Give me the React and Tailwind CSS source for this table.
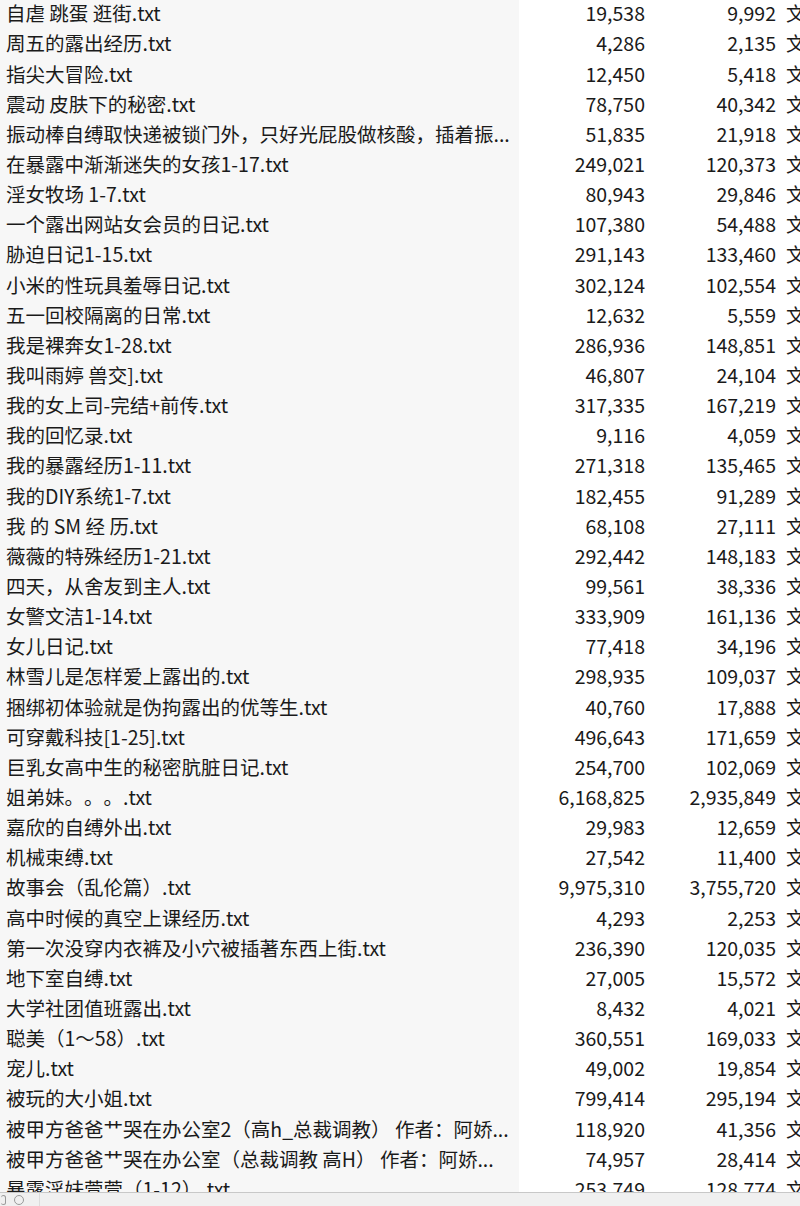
import React from 'react';

const files = [
  ['自虐 跳蛋 逛街.txt', '19,538', '9,992'],
  ['周五的露出经历.txt', '4,286', '2,135'],
  ['指尖大冒险.txt', '12,450', '5,418'],
  ['震动 皮肤下的秘密.txt', '78,750', '40,342'],
  ['振动棒自缚取快递被锁门外，只好光屁股做核酸，插着振...', '51,835', '21,918'],
  ['在暴露中渐渐迷失的女孩1-17.txt', '249,021', '120,373'],
  ['淫女牧场 1-7.txt', '80,943', '29,846'],
  ['一个露出网站女会员的日记.txt', '107,380', '54,488'],
  ['胁迫日记1-15.txt', '291,143', '133,460'],
  ['小米的性玩具羞辱日记.txt', '302,124', '102,554'],
  ['五一回校隔离的日常.txt', '12,632', '5,559'],
  ['我是裸奔女1-28.txt', '286,936', '148,851'],
  ['我叫雨婷 兽交].txt', '46,807', '24,104'],
  ['我的女上司-完结+前传.txt', '317,335', '167,219'],
  ['我的回忆录.txt', '9,116', '4,059'],
  ['我的暴露经历1-11.txt', '271,318', '135,465'],
  ['我的DIY系统1-7.txt', '182,455', '91,289'],
  ['我 的 SM 经 历.txt', '68,108', '27,111'],
  ['薇薇的特殊经历1-21.txt', '292,442', '148,183'],
  ['四天，从舍友到主人.txt', '99,561', '38,336'],
  ['女警文洁1-14.txt', '333,909', '161,136'],
  ['女儿日记.txt', '77,418', '34,196'],
  ['林雪儿是怎样爱上露出的.txt', '298,935', '109,037'],
  ['捆绑初体验就是伪拘露出的优等生.txt', '40,760', '17,888'],
  ['可穿戴科技[1-25].txt', '496,643', '171,659'],
  ['巨乳女高中生的秘密肮脏日记.txt', '254,700', '102,069'],
  ['姐弟妹。。。.txt', '6,168,825', '2,935,849'],
  ['嘉欣的自缚外出.txt', '29,983', '12,659'],
  ['机械束缚.txt', '27,542', '11,400'],
  ['故事会（乱伦篇）.txt', '9,975,310', '3,755,720'],
  ['高中时候的真空上课经历.txt', '4,293', '2,253'],
  ['第一次没穿内衣裤及小穴被插著东西上街.txt', '236,390', '120,035'],
  ['地下室自缚.txt', '27,005', '15,572'],
  ['大学社团值班露出.txt', '8,432', '4,021'],
  ['聪美（1～58）.txt', '360,551', '169,033'],
  ['宠儿.txt', '49,002', '19,854'],
  ['被玩的大小姐.txt', '799,414', '295,194'],
  ['被甲方爸爸艹哭在办公室2（高h_总裁调教） 作者：阿娇...', '118,920', '41,356'],
  ['被甲方爸爸艹哭在办公室（总裁调教 高H） 作者：阿娇...', '74,957', '28,414'],
  ['暴露淫妹萱萱（1-12）.txt', '253,749', '128,774'],
];

export default function App() {
  return (
    <div
      className="w-[800px] h-[1206px] bg-white text-[#1a1a1a] overflow-hidden flex flex-col [text-spacing-trim:space-all]"
      style={{ fontFamily: '"Noto Sans CJK SC", "Noto Sans", sans-serif' }}
    >
      <div className="h-[1192px] shrink-0 overflow-hidden">
        <div className="-mt-[2px]">
          {files.map(([name, size, packed], i) => (
            <div key={i} className="flex h-[30.15px] items-center text-[19.5px] leading-none whitespace-nowrap">
              <div className="w-[519px] shrink-0 h-full flex items-center pl-[6px] bg-[#f7f7f7] overflow-hidden">
                {name}
              </div>
              <div className="w-[126px] shrink-0 text-right">{size}</div>
              <div className="w-[131px] shrink-0 text-right">{packed}</div>
              <div className="shrink-0 pl-[10px]">文本文档</div>
            </div>
          ))}
        </div>
      </div>
      <div className="flex-1 flex items-center bg-[#f0f0f0] border-t border-[#c8c8c8]">
        <div className="w-[40px] h-full flex items-center gap-[8px] pl-[1px] border-r border-[#dcdcdc]">
          <div className="w-[5px] h-[10px] rounded-full border border-[#9a9a9a] border-l-0" />
          <div className="w-[10px] h-[10px] rounded-full border border-[#9a9a9a]" />
        </div>
      </div>
    </div>
  );
}
